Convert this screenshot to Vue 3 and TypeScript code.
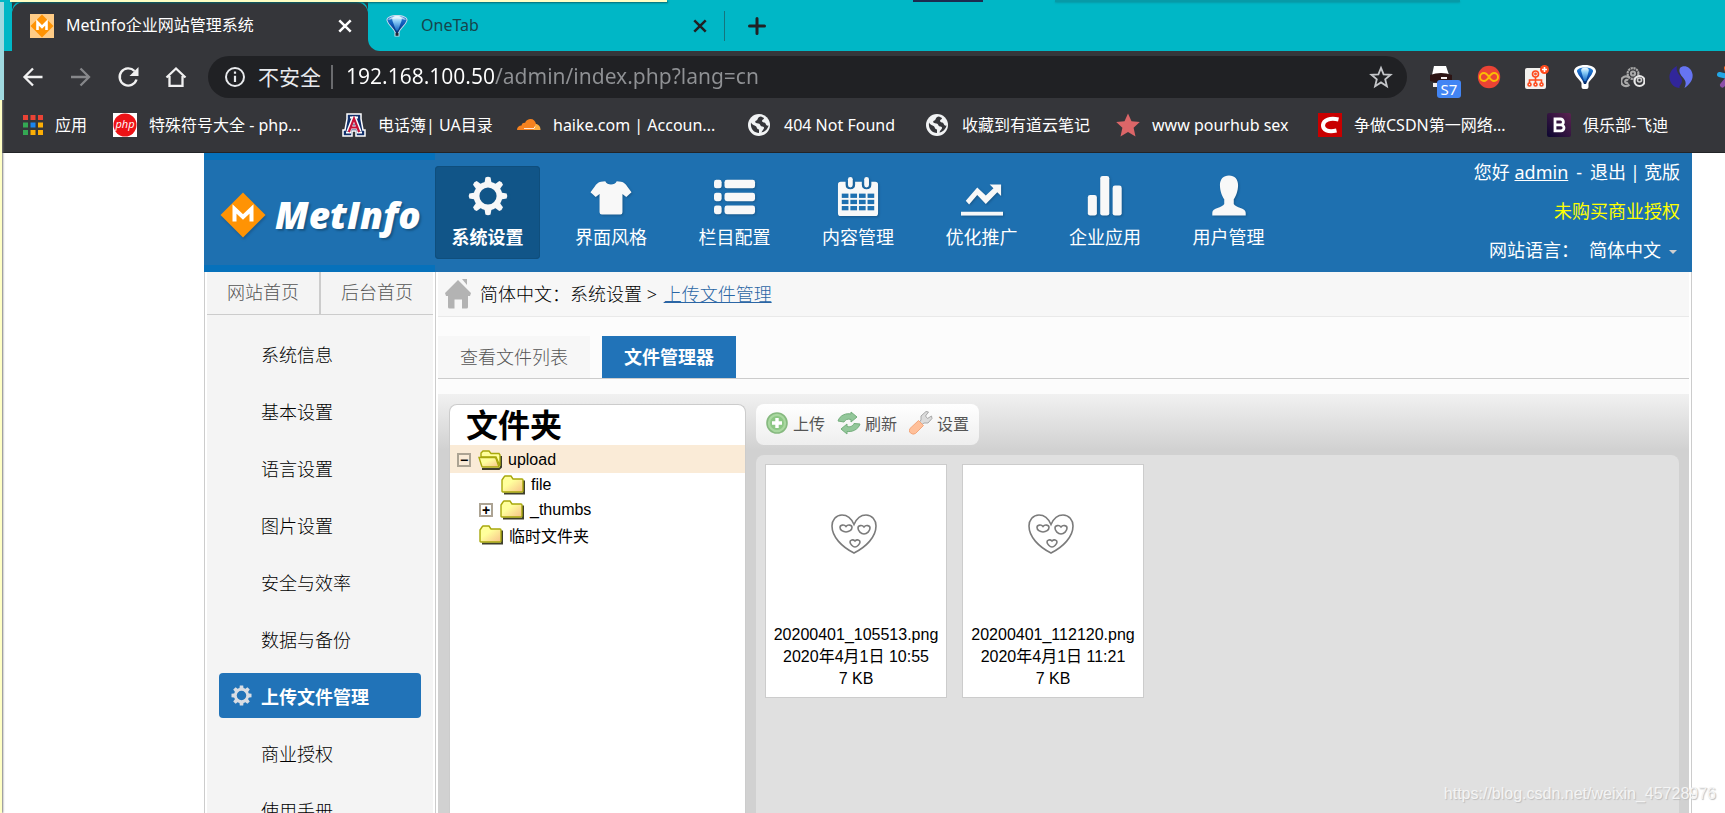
<script setup lang="ts">
import { ref } from 'vue'

interface NavItem { id: string; label: string }
interface Bookmark { icon: string; label: string }
interface FileItem { name: string; date: string; size: string }

const url = ref('192.168.100.50/admin/index.php?lang=cn')
const language = ref('cn')
const activeNav = ref('gear')
const activeMenu = ref('上传文件管理')
const activeTab = ref('文件管理器')

const bookmarks: Bookmark[] = [
  { icon: 'apps', label: '应用' },
  { icon: 'php', label: '特殊符号大全 - php...' },
  { icon: 'ua', label: '电话簿| UA目录' },
  { icon: 'cloud', label: 'haike.com | Accoun...' },
  { icon: 'globe', label: '404 Not Found' },
  { icon: 'globe', label: '收藏到有道云笔记' },
  { icon: 'star', label: 'www pourhub sex' },
  { icon: 'csdn', label: '争做CSDN第一网络...' },
  { icon: 'bold', label: '俱乐部-飞迪' },
]

const nav: NavItem[] = [
  { id: 'gear', label: '系统设置' },
  { id: 'shirt', label: '界面风格' },
  { id: 'list', label: '栏目配置' },
  { id: 'calendar', label: '内容管理' },
  { id: 'trend', label: '优化推广' },
  { id: 'bars', label: '企业应用' },
  { id: 'user', label: '用户管理' },
]

const menu: string[] = [
  '系统信息', '基本设置', '语言设置', '图片设置', '安全与效率',
  '数据与备份', '上传文件管理', '商业授权', '使用手册',
]

const tabs: string[] = ['查看文件列表', '文件管理器']

const files: FileItem[] = [
  { name: '20200401_105513.png', date: '2020年4月1日 10:55', size: '7 KB' },
  { name: '20200401_112120.png', date: '2020年4月1日 11:21', size: '7 KB' },
]

const teeth: number[] = [0, 45, 90, 135, 180, 225, 270, 315]
const appColors: string[] = [
  '#ea4335', '#ea4335', '#ea4335', '#34a853', '#1a84f0', '#fbae05', '#34a853', '#fbae05', '#fbae05',
]
</script>

<template>
  <div class="window">
    <svg class="defs" aria-hidden="true">
      <defs>
        <linearGradient id="balloonDeep" x1="0" y1="0" x2="0" y2="1">
          <stop offset="0" stop-color="#2a86dc" />
          <stop offset="0.5" stop-color="#0d55b4" />
          <stop offset="1" stop-color="#052a66" />
        </linearGradient>
        <linearGradient id="balloonShine" x1="0" y1="0" x2="0" y2="1">
          <stop offset="0" stop-color="#f4fbff" />
          <stop offset="0.35" stop-color="#8fd0f8" />
          <stop offset="1" stop-color="#1468c4" />
        </linearGradient>
        <linearGradient id="folderFill" x1="0" y1="0" x2="1" y2="1">
          <stop offset="0.4" stop-color="#ffff9c" />
          <stop offset="1" stop-color="#f7c08a" />
        </linearGradient>
        <linearGradient id="boldFill" x1="1" y1="0" x2="0" y2="1">
          <stop offset="0" stop-color="#5b2350" />
          <stop offset="1" stop-color="#0c0630" />
        </linearGradient>
        <symbol id="tree-folder" viewBox="0 0 24 20">
          <path d="M3 18.500h20V5.500" fill="none" stroke="#3f3f2c" stroke-width="2" />
          <path d="M1 5l2-3 1-1h6l2 3h9q1 0 1 1v11q0 1-1 1H2q-1 0-1-1z" fill="url(#folderFill)" stroke="#a8a80c" stroke-width="1.400" />
        </symbol>
        <symbol id="tree-open" viewBox="0 0 24 20">
          <path d="M4 19h17l2-2V6" fill="none" stroke="#3f3f2c" stroke-width="2" />
          <path d="M3 7V3l2-2h6l2 2.500h8l1 1.500v11l-4-9z" fill="#ffff9c" stroke="#a8a80c" stroke-width="1.400" />
          <path d="M1 7.500h15.500q1 0 1.500 1l3 8.500H5q-1 0-1.300-1z" fill="url(#folderFill)" stroke="#a8a80c" stroke-width="1.400" />
        </symbol>
      </defs>
    </svg>

    <header class="browser">
      <div class="tabstrip">
        <div class="tab current">
          <svg class="favicon" viewBox="0 0 24 24">
            <rect width="24" height="24" fill="#ffcc86" />
            <path d="M12 0.500 23.500 12 12 23.500 0.500 12z" fill="#ff9304" />
            <path d="M7.500 16V8.500L12 13l4.500-4.500V16" fill="none" stroke="#fff" stroke-width="2.600" />
          </svg>
          <span class="tab-title">MetInfo企业网站管理系统</span>
          <button class="tab-close" aria-label="关闭"><svg viewBox="0 0 14 14"><path d="M2 2l10 10M12 2 2 12" stroke="#fff" stroke-width="2.200" /></svg></button>
        </div>
        <div class="tab other">
          <svg class="favicon" viewBox="0 0 24 24">
            <path d="M12 1C6 1 1 3 1.500 6.500 3 11 7.500 14 9.500 18v4.500h5V18c2-4 6.500-7 8-11.500C23 3 18 1 12 1z" fill="#c9dcec" />
            <path d="M12 2C7 2 2 3.500 2.500 6.500 4 11 9 14 11 19h2c2-5 7-8 8.500-12.500C22 3.500 17 2 12 2z" fill="url(#balloonDeep)" />
            <path d="M12 2C8 2 6.500 3.500 7.500 7l3.500 9.500h2L16.500 7C17.500 3.500 16 2 12 2z" fill="url(#balloonShine)" />
            <path d="M3 6q9-3 18 0Q18 2 12 2T3 6z" fill="#e8f5ff" opacity="0.700" />
            <rect x="10.500" y="19" width="3" height="2.800" fill="#1d2733" />
          </svg>
          <span class="tab-title">OneTab</span>
          <button class="tab-close" aria-label="关闭"><svg viewBox="0 0 14 14"><path d="M2 2l10 10M12 2 2 12" stroke="#202124" stroke-width="2.200" /></svg></button>
        </div>
        <button class="new-tab" aria-label="新标签页"><svg viewBox="0 0 18 18"><path d="M9 1.500v15M1.500 9h15" stroke="#202124" stroke-width="3" stroke-linecap="round" /></svg></button>
      </div>

      <div class="toolbar">
        <div class="nav-buttons">
          <button class="icon-btn" aria-label="后退"><svg viewBox="0 0 24 24"><path d="M21.500 12h-18M12 3.500 3.500 12l8.500 8.500" fill="none" stroke="#f1f1f1" stroke-width="2.300" /></svg></button>
          <button class="icon-btn" aria-label="前进"><svg viewBox="0 0 24 24"><path d="M2 12h18M11.500 3.500 20 12l-8.500 8.500" fill="none" stroke="#86878a" stroke-width="2.300" /></svg></button>
          <button class="icon-btn" aria-label="刷新"><svg viewBox="0 0 24 24"><path d="M19.500 14.500A8.600 8.600 0 1 1 17.500 6" fill="none" stroke="#f1f1f1" stroke-width="2.400" /><path d="M21.500 2v9h-9z" fill="#f1f1f1" /></svg></button>
          <button class="icon-btn" aria-label="主页"><svg viewBox="0 0 24 24"><path d="M1.500 12.500 11 3.500l9.500 9M4.500 11v9.800h13V11" fill="none" stroke="#f1f1f1" stroke-width="2.300" /></svg></button>
        </div>
        <div class="omnibox">
          <svg class="info" viewBox="0 0 22 22"><circle cx="11" cy="11" r="9" fill="none" stroke="#e8eaed" stroke-width="2" /><path d="M11 9.800V16M11 5.500v2.300" stroke="#e8eaed" stroke-width="2.200" /></svg>
          <label class="insecure" for="address">不安全</label>
          <input id="address" v-model="url" class="address" type="text" spellcheck="false" />
          <button class="icon-btn star-btn" aria-label="收藏"><svg viewBox="0 0 24 24"><path d="M12 2.800l2.600 6.500 7 .500-5.400 4.500 1.700 6.900L12 17.400l-5.900 3.800 1.700-6.900L2.400 9.800l7-.500z" fill="none" stroke="#c4c6c9" stroke-width="1.800" /></svg></button>
        </div>
        <div class="extensions">
          <button class="ext" aria-label="S7">
            <svg viewBox="0 0 24 24"><path d="M5 1h12l3 9H3z" fill="#fff" /><path d="M1 10q11-4 22 0v6q-11 3-22 0z" fill="#2c1414" /><path d="M4 18h4v4H4zM12 12h6v2h-6z" fill="#f4eeee" /></svg>
            <span class="ext-badge">S7</span>
          </button>
          <button class="ext" aria-label="无限">
            <svg viewBox="0 0 24 24"><circle cx="12" cy="12" r="11.200" fill="#ea4335" /><path d="M12 12c-2-3-3.500-4-5-4a4 4 0 0 0 0 8c1.500 0 3-1 5-4s3.500-4 5-4a4 4 0 0 1 0 8c-1.500 0-3-1-5-4z" fill="none" stroke="#fbbc05" stroke-width="2" /></svg>
          </button>
          <button class="ext" aria-label="站点地图">
            <svg viewBox="0 0 24 24"><rect x="0" y="3" width="21" height="21" rx="2" fill="#f3f1ee" /><g fill="none" stroke="#ff4a1c" stroke-width="1.600"><circle cx="10.500" cy="9" r="3" /><circle cx="10.500" cy="9" r="0.600" /><path d="M10.500 12v6M4.500 18v-3h12v3" /><circle cx="4.500" cy="19.500" r="1.500" /><circle cx="10.500" cy="19.500" r="1.500" /><circle cx="16.500" cy="19.500" r="1.500" /></g><circle cx="19.500" cy="4.500" r="4.500" fill="#ff4a1c" /><path d="M19.500 2v5M17 4.500h5" stroke="#fff" stroke-width="1.600" /></svg>
          </button>
          <button class="ext" aria-label="OneTab">
            <svg viewBox="0 0 24 24"><path d="M12 0C6 0 0.500 2.500 1 7c1.500 5 6 8 7.500 11v4q0 2 2 2h3q2 0 2-2v-4C17 15 21.500 12 23 7c.500-4.500-5-7-11-7z" fill="#fff" /><path d="M12 2.500C7.500 2.500 3.500 4 4 6.500 5.500 11 9.500 14 11 19h2c1.500-5 5.500-8 7-12.500.500-2.500-3.500-4-8-4z" fill="url(#balloonDeep)" /><path d="M12 2.500C9 2.500 7.500 4 8.500 7l2.500 9h2l2.500-9c1-3-.500-4.500-3.500-4.500z" fill="url(#balloonShine)" /></svg>
          </button>
          <button class="ext" aria-label="齿轮">
            <svg viewBox="0 0 24 24"><g fill="none" stroke="#a9a9a9" stroke-width="2.200"><circle cx="12" cy="8.500" r="5.400" stroke-dasharray="2.200 .600" /><circle cx="12" cy="8.500" r="2" /><path d="M8.500 13a4.800 4.800 0 1 0 0 6.500" /><path d="M7 15.500a1.600 1.600 0 1 0 0 2" /></g><circle cx="18.500" cy="16" r="5" fill="none" stroke="#e8e8e8" stroke-width="2.200" /><circle cx="18.500" cy="15" r="2" fill="none" stroke="#ccc" stroke-width="1.600" /></svg>
          </button>
          <button class="ext" aria-label="水滴">
            <svg viewBox="0 0 24 24"><path d="M8 1c-5 2.500-8 7-7.500 12C1 19 5.500 23 11 23c-2-1.500 2-3.500 2-7.500C13 11 6 8 8 1z" fill="#31269a" /><path d="M11 3c3-3.500 11-2 12.500 6C24.500 15 20 20 15.500 23c2.500-6 .500-8-2-11-2.500-3-4-6-2.500-9z" fill="#6674f2" /></svg>
          </button>
          <button class="ext" aria-label="星形">
            <svg viewBox="0 0 24 24"><g stroke-width="5" stroke-linecap="round"><path d="M12 12 9.500 3" stroke="#ff6a26" /><path d="M12 12 2.500 9.500" stroke="#22a7e6" /><path d="M12 12 5.500 20" stroke="#8b4fa8" /><path d="M12 12l9-3" stroke="#ffc20e" /><path d="M12 12l5 8" stroke="#4caf50" /></g></svg>
          </button>
        </div>
      </div>

      <nav class="bookmarks" aria-label="书签">
        <a v-for="b in bookmarks" :key="b.label" class="bookmark" href="#">
          <svg v-if="b.icon === 'apps'" class="bm-icon small" viewBox="0 0 20 20">
            <rect v-for="(c, i) in appColors" :key="i" :x="(i % 3) * 7.500" :y="Math.floor(i / 3) * 7.500" width="5" height="5" :fill="c" />
          </svg>
          <svg v-else-if="b.icon === 'php'" class="bm-icon" viewBox="0 0 24 24">
            <rect width="24" height="24" fill="#fff" /><circle cx="12" cy="12" r="11.500" fill="#ed1216" />
            <text x="12" y="15" text-anchor="middle" class="php-text">php</text>
          </svg>
          <svg v-else-if="b.icon === 'ua'" class="bm-icon" viewBox="0 0 24 24">
            <path d="M5 1h14v5l2 11h2v6h-9v-5h-4v5H1v-6h2L5 6z" fill="#12306b" stroke="#fff" stroke-width="1.500" />
            <path d="M8 4.500h8M4 19.500h5M15 19.500h5" fill="none" stroke="#fff" stroke-width="2.200" />
            <path d="M6.500 18.500 11.500 5.500h1l5 13M9 14.500h6" fill="none" stroke="#fff" stroke-width="4.200" />
            <path d="M6.800 19 12 5.500l5.200 13.500M9 14.500h6" fill="none" stroke="#c41238" stroke-width="2.200" />
          </svg>
          <svg v-else-if="b.icon === 'cloud'" class="bm-icon" viewBox="0 0 24 24">
            <path d="M0 17c0-3 2-4.500 4.500-4.500C5 10 7 9.500 8 10c1-3 3.500-4 5.500-4 3 0 5 2 5.500 5l-1 6z" fill="#f6821f" />
            <path d="M16.500 17l2-6c3 0 5 2.500 5 6z" fill="#fbad41" /><path d="M7 15.500h10l1-2" fill="none" stroke="#fff" stroke-width="0.800" />
          </svg>
          <svg v-else-if="b.icon === 'globe'" class="bm-icon" viewBox="0 0 24 24">
            <circle cx="11" cy="12" r="11" fill="#f1f3f4" />
            <path d="M13 3.500c-4 .500-2.500 3-4.500 4-2 .500-1.500 2.500.500 2.800 2 .200 3 .700 3.500 2.200.500 1.500 3 .500 3.500 2 .300 2-2 2.500-2.500 5 3-.500 6.500-3.500 7-7-1.500.500-2.500-.500-3-2-.500-1.500-3-.500-3.500-2.500 0-1.500 2-1.500 2-3zM3 9.500c1.500 3 4.500 2.500 5.500 4.500.500 1.500 1 2.500 2.500 2.500v3.500C6.500 20 2 16 3 9.500z" fill="#35363a" />
          </svg>
          <svg v-else-if="b.icon === 'star'" class="bm-icon" viewBox="0 0 24 24">
            <path d="M12 0.500l3.500 7.800 8.300.800-6.200 5.700 1.900 8.700L12 19l-7.500 4.500 1.900-8.700L.200 9.100l8.300-.800z" fill="#dc6668" />
          </svg>
          <svg v-else-if="b.icon === 'csdn'" class="bm-icon" viewBox="0 0 24 24">
            <rect width="24" height="24" fill="#c80000" /><path d="M20.500 6.500C12 4.500 5.500 7 5 12c-.300 5 5 7.500 13.500 5.500" fill="none" stroke="#fff" stroke-width="4" />
          </svg>
          <svg v-else class="bm-icon" viewBox="0 0 24 24">
            <rect width="24" height="24" rx="2" fill="url(#boldFill)" /><path d="M8 6h5.500a2.800 2.800 0 0 1 0 5.800H8zM8 11.800h6a3 3 0 0 1 0 6H8zV6" fill="none" stroke="#fff" stroke-width="2.800" />
          </svg>
          <span>{{ b.label }}</span>
        </a>
      </nav>
    </header>

    <div class="page">
      <div class="admin">
        <header class="top">
          <a class="logo" href="#">
            <span class="logo-inner">
              <svg class="logo-mark" viewBox="0 0 46 46"><path d="M23 0.500 45.500 23 23 45.500 0.500 23z" fill="#ff9304" /><path d="M14.500 29.500V17L23 25l8.500-8v12.500" fill="none" stroke="#fff" stroke-width="4" /></svg>
              <span class="logo-text">MetInfo</span>
            </span>
          </a>
          <nav class="main-nav">
            <a v-for="n in nav" :key="n.id" href="#" class="nav-item" :class="{ active: n.id === activeNav }" @click.prevent="activeNav = n.id">
              <svg class="nav-icon" viewBox="0 0 44 44" fill="#f8f8f8">
                <g v-if="n.id === 'gear'">
                  <circle cx="22" cy="22" r="12" fill="none" stroke="#f8f8f8" stroke-width="6" />
                  <path v-for="t in teeth" :key="t" d="M18 10l1.300-7.500q2.700-1.500 5.400 0L26 10z" :transform="`rotate(${t} 22 22)`" />
                </g>
                <path v-else-if="n.id === 'shirt'" d="M16 6.500c2 4.500 10 4.500 12 0l4.500.500c3 .500 5 2.500 6.500 5l4.500 6-5.500 5-4-3V39q0 2.500-2 2.500H12.500q-2.500 0-2.500-2.500V20l-4 3L.500 18 5 12c1.500-2.500 3.500-4.500 6.500-5z" />
                <g v-else-if="n.id === 'list'">
                  <rect x="0" y="5" width="8" height="9" rx="2.500" /><rect x="11" y="5" width="32" height="9" rx="2.500" />
                  <rect x="0" y="18.500" width="8" height="9" rx="2.500" /><rect x="11" y="18.500" width="32" height="9" rx="2.500" />
                  <rect x="0" y="32" width="8" height="9" rx="2.500" /><rect x="11" y="32" width="32" height="9" rx="2.500" />
                </g>
                <g v-else-if="n.id === 'calendar'">
                  <path d="M4 7h5v3q0 5 5 5t5-5V7h7v3q0 5 5 5t5-5V7h4q3 0 3 3v30q0 3-3 3H4q-3 0-3-3V10q0-3 3-3z" />
                  <rect x="11.500" y="2" width="5" height="11" rx="2.500" /><rect x="28.500" y="2" width="5" height="11" rx="2.500" />
                  <g fill="#1e70b0">
                    <template v-for="r in 3" :key="r"><rect v-for="c in 4" :key="c" :x="-4 + c * 9" :y="13 + r * 6.500" width="7" height="4.500" /></template>
                  </g>
                </g>
                <g v-else-if="n.id === 'trend'">
                  <path d="M5 27l12-14 9 8.500 8-7.500-4-4h12v12l-4-4L26 30.500 17 21l-8.500 10z" /><rect x="0" y="38.500" width="44" height="4" />
                </g>
                <g v-else-if="n.id === 'bars'">
                  <rect x="4" y="21" width="9.500" height="21.500" rx="2.500" /><rect x="17" y="1" width="9.500" height="41.500" rx="2.500" /><rect x="30" y="11" width="9.500" height="31.500" rx="2.500" />
                </g>
                <path v-else d="M22 0.500c6 0 9.500 4 9.500 10 0 6.500-2.500 12-4.500 15v5c2 4 12.500 4 12.500 9v3h-35v-3c0-5 10.500-5 12.500-9v-5c-2-3-4.500-8.500-4.500-15 0-6 3.500-10 9.500-10z" />
              </svg>
              <span>{{ n.label }}</span>
            </a>
          </nav>
          <div class="account">
            <p>您好 <a class="u" href="#">admin</a><span class="dash">-</span><a href="#">退出</a><span class="bar">|</span><a href="#">宽版</a></p>
            <p><a class="license" href="#">未购买商业授权</a></p>
            <p class="lang">
              <label for="lang">网站语言：</label>
              <select id="lang" v-model="language"><option value="cn">简体中文</option></select>
              <svg class="caret" viewBox="0 0 8 4"><path d="M0 0h8L4 4z" fill="#cfcfcf" /></svg>
            </p>
          </div>
        </header>

        <div class="body">
          <aside class="sidebar">
            <div class="side-inner">
              <div class="home-links"><a href="#">网站首页</a><a href="#">后台首页</a></div>
              <nav class="menu">
                <a v-for="m in menu" :key="m" href="#" class="menu-item" :class="{ active: m === activeMenu }" @click.prevent="activeMenu = m">
                  <svg v-if="m === activeMenu" class="menu-gear" viewBox="0 0 44 44" fill="#d9dde3">
                    <circle cx="22" cy="22" r="13" fill="none" stroke="#d9dde3" stroke-width="6" />
                    <path v-for="t in teeth" :key="t" d="M17.500 9l1-8h7l1 8z" :transform="`rotate(${t} 22 22)`" />
                  </svg>
                  <span>{{ m }}</span>
                </a>
              </nav>
            </div>
          </aside>

          <main class="content">
            <div class="crumbs">
              <svg class="house" viewBox="0 0 26 30"><path d="M13 1l13 13-1 3h-2v11q0 1.500-1.500 1.500H17v-9H9.500v9h-5Q3 29.500 3 28V17H1l-1-3zM17 0h5v6z" fill="#b3b3b3" /></svg>
              <span class="crumb-text">简体中文：系统设置 &gt; <a href="#">上传文件管理</a></span>
            </div>
            <div class="tabs">
              <button v-for="t in tabs" :key="t" class="page-tab" :class="{ active: t === activeTab }" @click="activeTab = t">{{ t }}</button>
            </div>
            <div class="finder">
              <section class="folders">
                <h1>文件夹</h1>
                <ul class="tree">
                  <li class="row selected"><button class="toggle" aria-label="折叠">−</button><svg class="folder"><use href="#tree-open" /></svg><a href="#">upload</a></li>
                  <li class="row level-2"><svg class="folder"><use href="#tree-folder" /></svg><a href="#">file</a></li>
                  <li class="row level-1"><button class="toggle" aria-label="展开">+</button><svg class="folder"><use href="#tree-folder" /></svg><a href="#">_thumbs</a></li>
                  <li class="row level-1"><svg class="folder"><use href="#tree-folder" /></svg><a href="#">临时文件夹</a></li>
                </ul>
              </section>
              <section class="files">
                <div class="file-tools">
                  <button>
                    <svg viewBox="0 0 24 24"><circle cx="12" cy="12" r="10" fill="#a9d8a0" stroke="#86b97f" stroke-width="1.600" /><circle cx="12" cy="12" r="7" fill="#8cc784" /><path d="M12 7v10M7 12h10" stroke="#fff" stroke-width="3.400" /></svg>上传
                  </button>
                  <button>
                    <svg viewBox="0 0 24 24"><g fill="#93c79a" stroke="#74ae7c" stroke-width="1"><path d="M1 10c2-6 8-8 13-7V1l6 5-6 5V8.500c-3-1-6 0-7 2.500z" /><path d="M23 13c-2 6-8 8-13 7.500V23l-6-5 6-5v2.500c3 1 6-.500 7-3z" /></g></svg>刷新
                  </button>
                  <button>
                    <svg viewBox="0 0 24 24"><path d="M12 9V5l5-4.500 2.500.500-3 4 2 2.500 4-2.500.500 2.500-4 4.500h-4l-2 1.500-2.500-2.500z" fill="#dcdcdc" stroke="#a9a9a9" /><path d="M9.500 9.500l5 5-8 8q-2.500 1.500-5-.500t-.500-4.500z" fill="#ffc09a" stroke="#f3a67b" /></svg>设置
                  </button>
                </div>
                <div class="file-list">
                  <figure v-for="f in files" :key="f.name" class="file">
                    <svg class="thumb" viewBox="0 0 46 40" fill="none" stroke="#7b7b7b" stroke-width="1.600">
                      <path d="M23 10.500C20 3.500 15.500 1 11 1 5 1 1 6 1 12c0 11 10 21 22 27 12-6 22-16 22-27 0-6-4-11-10-11-4.500 0-9 2.500-12 9.500z" />
                      <path d="M15 12.500c-2-2.500-6-1.500-6 1 0 2.500 3 4.500 6 4.500s6-2 6-4.500-4-3.500-6-1zM33 13c-2-2.500-6-1.500-6 1 0 3 3 6 6 6s6-3 6-6c0-2.500-4-3.500-6-1zM24 27c-2-2-5-1-5 1s3 5 5 5 5-3 5-5-3-3-5-1z" />
                    </svg>
                    <figcaption>
                      <span>{{ f.name }}</span><span>{{ f.date }}</span><span>{{ f.size }}</span>
                    </figcaption>
                  </figure>
                </div>
              </section>
            </div>
          </main>
        </div>
      </div>
    </div>

    <i class="edge-top"></i><i class="edge-left"></i><i class="edge-haze"></i><i class="edge-dark"></i><i class="edge-shade"></i>
    <span class="watermark">https://blog.csdn.net/weixin_45728976</span>
  </div>
</template>

<style>
body { margin: 0; background: #fff; }
</style>

<style scoped>
* { box-sizing: border-box; }
a { color: inherit; text-decoration: none; }
button { margin: 0; padding: 0; border: 0; background: none; font: inherit; color: inherit; display: flex; align-items: center; justify-content: center; }
p, h1, ul, figure { margin: 0; padding: 0; }
ul { list-style: none; }
svg { display: block; flex: none; }

.window { position: relative; display: flex; flex-direction: column; height: 100vh; overflow: hidden; font-family: "Noto Sans", "Noto Sans CJK SC", sans-serif; font-size: 18px; color: #000; }
.defs { position: absolute; width: 0; height: 0; }

.browser { flex: none; background: #35363a; border-bottom: 1px solid #232427; font-size: 16px; color: #fff; }
.tabstrip { display: flex; align-items: stretch; height: 51px; padding-left: 12px; background: linear-gradient(90deg, #00b7c6 12px, #35363a 12px, #35363a 400px, #00b7c6 400px); }
.tab { display: flex; align-items: center; gap: 12px; }
.favicon { width: 24px; height: 24px; }
.tab-title { flex: 1; padding-bottom: 2px; line-height: 24px; white-space: nowrap; }
.tab-close { width: 20px; height: 20px; }
.tab-close svg { width: 16px; height: 16px; }
.current { width: 356px; padding: 0 13px 0 18px; background: #35363a; box-shadow: inset 0 2px #00b7c6; border-radius: 12px 12px 0 0; }
.other { width: 357px; padding-left: 17px; background: #00b7c6; color: #16454b; border-radius: 0 0 0 12px; }
.other::after { content: ""; width: 1px; height: 30px; margin-left: 2px; background: #14757e; }
.new-tab { width: 64px; background: #00b7c6; }
.new-tab svg { width: 18px; height: 18px; }

.toolbar { display: flex; align-items: center; height: 47px; padding: 5px 0 0 21px; }
.nav-buttons { display: flex; gap: 24px; width: 187px; }
.icon-btn { flex: none; width: 24px; height: 24px; }
.icon-btn svg { width: 24px; height: 24px; }
.omnibox { flex: 1; display: flex; align-items: center; height: 42px; padding: 0 14px 0 16px; border-radius: 21px; background: #202124; font-size: 21px; }
.info { width: 22px; height: 22px; }
.insecure { margin-left: 12px; padding-right: 10px; border-right: 2px solid #6a6b6e; line-height: 24px; color: #e8eaed; }
.address { flex: 1; min-width: 0; margin-left: 13px; padding: 0 0 2px; border: 0; outline: 0; height: 32px; font: inherit; color: transparent; background: linear-gradient(90deg, #fff 149px, #8f9194 149px); -webkit-background-clip: text; background-clip: text; }
.extensions { display: flex; gap: 24px; width: 318px; padding-left: 22px; overflow: hidden; }
.ext { position: relative; flex: none; width: 24px; height: 42px; }
.ext svg { width: 24px; height: 24px; }
.ext-badge { position: absolute; left: 8px; bottom: 0; width: 24px; height: 18px; border-radius: 3px; background: #4285f4; font-size: 15px; line-height: 18px; text-align: center; }

.bookmarks { display: grid; grid-template-columns: 90px 229px 175px 231px 178px 190px 202px 229px 1fr; align-items: center; height: 54px; padding-left: 23px; }
.bookmark { display: flex; align-items: center; gap: 12px; line-height: 24px; white-space: nowrap; }
.bm-icon { width: 24px; height: 24px; }
.bm-icon.small { width: 20px; height: 20px; }
.php-text { font: italic 11px "Open Sans", sans-serif; fill: #fff; }

.page { flex: 1; min-height: 0; display: flex; padding: 0 33px 0 204px; }
.admin { flex: 1; min-width: 0; display: flex; flex-direction: column; }
.top { flex: none; display: flex; height: 119px; background: #1e70b0; color: #fff; }
.logo { width: 231px; padding: 7px 0; background: #0671bb; }
.logo-inner { display: flex; align-items: center; gap: 9px; height: 105px; padding: 5px 0 0 16px; background: #1e70b0; }
.logo-mark { width: 46px; height: 46px; filter: drop-shadow(1px 2px 1px #1a5c92); }
.logo-text { font: italic 800 37px/48px "Open Sans", sans-serif; text-shadow: 2px 2px 2px #165788; }
.main-nav { flex: 0 1 846px; display: flex; justify-content: space-between; align-items: flex-start; padding-top: 13px; }
.nav-item { display: flex; flex-direction: column; align-items: center; width: 105px; height: 93px; padding-top: 9px; border-radius: 4px; line-height: 28px; white-space: nowrap; }
.nav-item.active { background: #115588; box-shadow: inset 0 0 0 1px #0f4e7c; font-weight: bold; }
.nav-icon { width: 42px; height: 42px; margin-bottom: 6px; filter: drop-shadow(1px 1px 1px #17578a); }
.account { flex: 1; display: flex; flex-direction: column; gap: 1px; padding-right: 12px; text-align: right; white-space: nowrap; }
.account p { line-height: 38px; }
.u { text-decoration: underline; }
.dash { margin: 0 8px; }
.bar { margin: 0 4px; }
.license { color: #ffff00; }
.lang { display: flex; justify-content: flex-end; align-items: center; }
.lang select { appearance: none; border: 0; padding: 0; background: none; font: inherit; color: inherit; margin-left: 10px; }
.lang option { color: #000; }
.caret { width: 8px; height: 4px; margin: 4px 3px 0 8px; }

.body { flex: 1; min-height: 0; display: flex; border: solid #ccc; border-width: 0 1px; }
.sidebar { flex: none; width: 231px; padding: 0 2px; border-right: 1px solid #ccc; }
.side-inner { height: 100%; background: #f4f4f4; overflow: hidden; font-weight: 300; }
.home-links { display: flex; height: 43px; border-bottom: 1px solid #ccc; color: #555; }
.home-links a { flex: 1; text-align: center; line-height: 41px; }
.home-links a + a { border-left: 2px solid #ccc; }
.menu { display: flex; flex-direction: column; gap: 12px; padding: 16px 12px 0; }
.menu-item { display: flex; align-items: center; flex: none; height: 45px; padding-left: 42px; border-radius: 4px; }
.menu-item.active { padding-left: 12px; background: #2173b8; color: #fff; font-weight: bold; }
.menu-gear { width: 21px; height: 21px; margin-right: 9px; }

.content { flex: 1; min-width: 0; display: flex; flex-direction: column; margin: 0 2px; background: #fcfcfc; }
.crumbs { flex: none; display: flex; align-items: center; gap: 9px; height: 45px; padding-left: 7px; background: #f7f7f7; border-bottom: 1px solid #e9e9e9; font-weight: 300; white-space: nowrap; }
.crumb-text { padding-bottom: 2px; }
.crumbs a { margin-left: 2px; color: #2b66a5; text-decoration: underline; }
.house { width: 26px; height: 30px; }
.tabs { flex: none; display: flex; gap: 12px; margin-top: 19px; border-bottom: 1px solid #ccc; }
.page-tab { height: 42px; padding: 0 22px 2px; background: #f7f7f7; color: #555; font-weight: 300; }
.page-tab.active { background: #2173b8; color: #fff; font-weight: bold; }
.finder { flex: 1; min-height: 0; display: flex; gap: 10px; margin-top: 15px; padding: 10px 10px 0 11px; background: linear-gradient(#f1f1f1, #d1d1d1 56px); font: 16px "Liberation Sans", "Noto Sans CJK SC", sans-serif; }
.folders { flex: none; width: 297px; border: 1px solid #ccc; border-bottom: 0; border-radius: 8px 8px 0 0; background: #fff; }
.folders h1 { padding: 0 0 4px 16px; font: bold 32px/36px "Noto Sans CJK SC", sans-serif; }
.row { display: flex; align-items: center; height: 25px; padding-left: 7px; }
.row.selected { height: 28px; margin-bottom: -1px; padding-top: 2px; background: #faebd7; }
.level-1 { padding-left: 29px; }
.level-2 { padding-left: 51px; }
.toggle { width: 14px; height: 14px; margin-right: 7px; border: 2px solid #aca393; background: #fff; font: bold 14px/10px "Liberation Sans", sans-serif; }
.selected .toggle { background: #faebd7; }
.folder { width: 24px; height: 20px; margin-right: 6px; }
.files { flex: 1; min-width: 0; display: flex; flex-direction: column; align-items: flex-start; }
.file-tools { flex: none; display: flex; gap: 12px; height: 41px; padding: 0 10px 4px 9px; border-radius: 8px; background: linear-gradient(#fff, #eee); color: #555; }
.file-tools button { gap: 4px; }
.file-tools svg { width: 24px; height: 24px; }
.file-list { flex: 1; align-self: stretch; display: flex; align-items: flex-start; gap: 15px; margin-top: 10px; padding: 9px; border-radius: 8px 8px 0 0; background: #e0e0e0; }
.file { display: flex; flex-direction: column; align-items: center; width: 182px; height: 234px; border: 1px solid #ccc; background: #fff; }
.thumb { width: 46px; height: 40px; margin: 49px 4px 70px 0; }
figcaption { display: flex; flex-direction: column; align-items: center; line-height: 22px; white-space: nowrap; }

.edge-top, .edge-left, .edge-haze, .edge-dark, .edge-shade { position: absolute; }
.edge-top { left: 10px; top: 0; width: 657px; height: 2px; background: #ffffc4; box-shadow: 1px 1px 2px #05656d; }
.edge-left { left: 0; top: 51px; bottom: 0; width: 2px; background: #ffffc4; box-shadow: 1px 0 2px #777; }
.edge-haze { left: 0; top: 2px; width: 4px; height: 98px; background: #a0d9df; }
.edge-dark { left: 913px; top: 0; width: 70px; height: 2px; background: #1d2b4f; }
.edge-shade { left: 1055px; top: 0; width: 405px; height: 2px; background: #079aa7; box-shadow: 0 1px 2px #079aa7; }
.watermark { position: absolute; right: 9px; bottom: 8px; font: 16px/22px "Liberation Sans", sans-serif; color: #f4f4f4; text-shadow: 1px 1px 1px #bdbdbd; }
</style>
